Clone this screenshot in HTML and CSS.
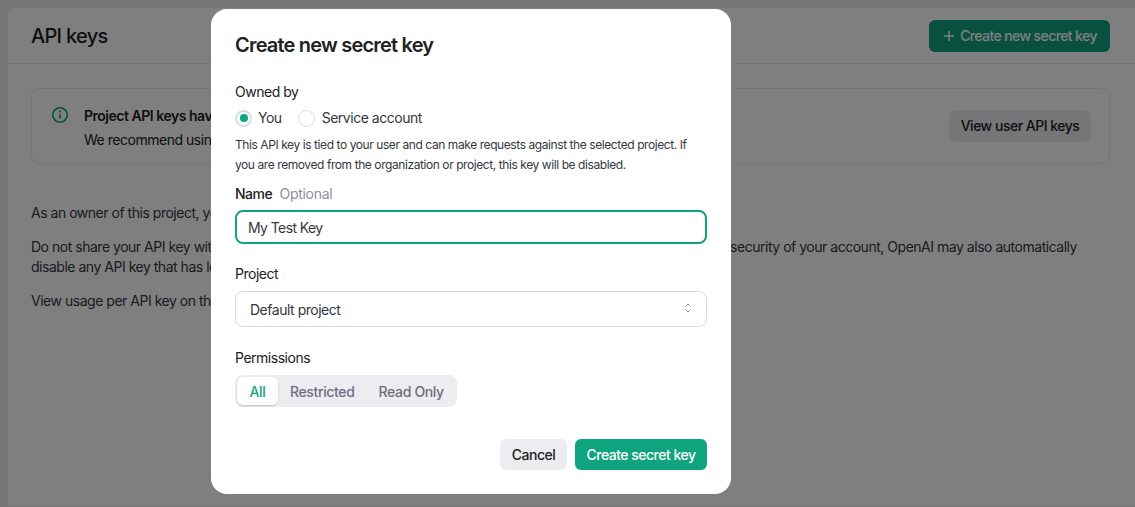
FILE: index.html
```html
<!DOCTYPE html>
<html lang="en">
<head>
    <meta charset="UTF-8">
    <meta name="viewport" content="width=device-width, initial-scale=1.0">
    <title>API keys</title>
    <link rel="stylesheet" href="styles.css">
</head>
<body>
    <div class="panel">
        <div class="panel-header">
            <h1>API keys</h1>
            <button class="btn btn-green" type="button">
                <svg class="plus-icon" viewBox="0 0 12 12" width="12" height="12"><path d="M6 1v10M1 6h10" fill="none" stroke="currentColor" stroke-width="1.4"/></svg>
                Create new secret key
            </button>
        </div>
        <div class="panel-body">
            <div class="notice">
                <svg class="info-icon" viewBox="0 0 18 18" width="18" height="18">
                    <circle cx="9" cy="9" r="7.2" fill="none" stroke="currentColor" stroke-width="1.6"/>
                    <path d="M9 8.2v4.4" fill="none" stroke="currentColor" stroke-width="1.7"/>
                    <circle cx="9" cy="5.6" r="1" fill="currentColor"/>
                </svg>
                <div class="notice-text">
                    <strong>Project API keys have replaced user API keys.</strong>
                    <p>We recommend using project based API keys for more granular control over your resources.</p>
                </div>
                <button class="btn btn-grey" type="button">View user API keys</button>
            </div>
            <div class="about">
                <p>As an owner of this project, you can view and manage all API keys in this project.</p>
                <p>Do not share your API key with others, or expose it in the browser or other client-side code. In order to protect the security of your account, OpenAI may also automatically disable any API key that has leaked publicly.</p>
                <p>View usage per API key on the Usage page.</p>
            </div>
        </div>
    </div>

    <div class="overlay">
        <form class="modal">
            <h2>Create new secret key</h2>

            <div class="field-label owned-label">Owned by</div>
            <div class="radio-row">
                <label class="radio-item"><span class="radio radio-on"></span>You</label>
                <label class="radio-item"><span class="radio"></span>Service account</label>
            </div>
            <p class="help">This API key is tied to your user and can make requests against the selected project. If you are removed from the organization or project, this key will be disabled.</p>

            <div class="field-label name-label">Name <span class="optional">Optional</span></div>
            <input class="name-input" type="text" value="My Test Key">

            <div class="field-label project-label">Project</div>
            <div class="select">
                <span>Default project</span>
                <svg viewBox="0 0 6 10" width="6" height="10"><path d="M.6 3.4 3 1l2.4 2.4M.6 6.6 3 9l2.4-2.4" fill="none" stroke="currentColor" stroke-width="1"/></svg>
            </div>

            <div class="field-label perm-label">Permissions</div>
            <div class="segments">
                <span class="segment segment-on">All</span>
                <span class="segment">Restricted</span>
                <span class="segment">Read Only</span>
            </div>

            <div class="modal-actions">
                <button class="btn btn-cancel" type="button">Cancel</button>
                <button class="btn btn-submit" type="submit">Create secret key</button>
            </div>
        </form>
    </div>
</body>
</html>
```

FILE: styles.css
```css
* { box-sizing: border-box; }
html, body { height: 100%; }
body {
    margin: 0;
    padding: 7px 0 0 7px;
    background: #ececec;
    color: #202123;
    font-family: Inter, "Liberation Sans", sans-serif;
    font-size: 14px;
    line-height: 20px;
    letter-spacing: -0.48px;
    overflow: hidden;
}
button { font: inherit; letter-spacing: inherit; border: none; cursor: pointer; }
p { margin: 0; }

.panel {
    height: 100%;
    background: #fff;
    border: 1px solid #ececf1;
    border-right: none;
    border-radius: 8px 0 0 0;
}
.panel-header {
    display: flex;
    justify-content: space-between;
    align-items: center;
    height: 56px;
    padding: 0 25px 0 23px;
    border-bottom: 1px solid #ececf1;
}
h1 { margin: 0; font-size: 20px; font-weight: 500; letter-spacing: -0.7px; }

.btn {
    display: inline-flex;
    align-items: center;
    justify-content: center;
    height: 32px;
    border-radius: 6px;
    font-weight: 500;
    letter-spacing: -0.5px;
}
.btn-green { width: 181px; gap: 5px; padding-left: 7px; letter-spacing: -0.6px; background: #10a37f; color: #fff; }
.btn-grey { width: 142px; background: #ececf1; color: #202123; }
.btn-cancel { width: 67px; height: 31px; background: #ececf1; color: #202123; }
.btn-submit { width: 132px; height: 31px; background: #10a37f; color: #fff; }

.panel-body { padding: 24px 25px 0 23px; }
.notice {
    display: flex;
    align-items: center;
    height: 76px;
    padding: 0 18px 0 19px;
    border: 1px solid #ececf1;
    border-radius: 8px;
}
.info-icon { color: #10a37f; margin: -23px 15px 0 0; flex: none; }
.notice-text { flex: 1; padding-top: 3px; line-height: 24px; white-space: nowrap; overflow: hidden; }
.notice-text strong { font-weight: 600; }

.about { padding-top: 39px; color: #353740; }
.about p { margin-bottom: 14px; }

.overlay {
    position: fixed;
    inset: 0;
    padding: 9px 0 0 211px;
    background: rgba(0, 0, 0, 0.5);
}
.modal {
    width: 520px;
    height: 485px;
    padding: 24px;
    background: #fff;
    border-radius: 16px;
}
h2 { margin: 0; font-size: 20px; line-height: 24px; font-weight: 600; letter-spacing: -0.8px; color: #202123; }

.field-label { font-weight: 400; color: #202123; }
.owned-label { margin-top: 25px; }
.name-label { margin-top: 9px; font-weight: 500; }
.project-label { margin-top: 20px; }
.perm-label { margin-top: 21px; }
.optional { margin-left: 4px; font-weight: 400; letter-spacing: -0.3px; color: #8e8ea0; }

.radio-row { display: flex; gap: 16px; margin-top: 6px; }
.radio-item { display: flex; align-items: center; gap: 7px; color: #353740; }
.radio-item:first-child { gap: 6px; }
.radio {
    display: flex;
    align-items: center;
    justify-content: center;
    width: 17px;
    height: 17px;
    border: 1px solid #d9d9e3;
    border-radius: 50%;
}
.radio-on { border: 2px solid #cfe3de; }
.radio-on::after {
    content: "";
    width: 8px;
    height: 8px;
    border-radius: 50%;
    background: #10a37f;
}
.help { margin-top: 7px; font-size: 12px; letter-spacing: -0.42px; color: #353740; }

.name-input {
    display: block;
    width: 100%;
    height: 34px;
    margin-top: 6px;
    padding: 0 11px;
    border: 2px solid #10a37f;
    border-radius: 8px;
    outline: none;
    font: inherit;
    letter-spacing: -0.6px;
    color: #353740;
}
.select {
    display: flex;
    align-items: center;
    justify-content: space-between;
    height: 36px;
    margin-top: 7px;
    padding: 1px 15px 0 14px;
    border: 1px solid #d9d9e3;
    border-radius: 8px;
    color: #353740;
}
.select svg { color: #8e8ea0; margin-top: -3px; }

.segments {
    display: inline-flex;
    height: 32px;
    margin-top: 7px;
    padding: 2px;
    border-radius: 8px;
    background: #ececf1;
}
.segment {
    display: flex;
    align-items: center;
    padding: 2px 12px 0;
    border-radius: 6px;
    font-weight: 500;
    letter-spacing: -0.35px;
    color: #6e6e80;
}
.segment:last-child { padding-right: 11px; }
.segment-on {
    padding: 2px 12.5px 0;
    background: #fff;
    color: #10a37f;
    box-shadow: 0 1px 2px rgba(0, 0, 0, 0.2);
}

.modal-actions { display: flex; justify-content: flex-end; gap: 8px; margin-top: 32px; }
```
